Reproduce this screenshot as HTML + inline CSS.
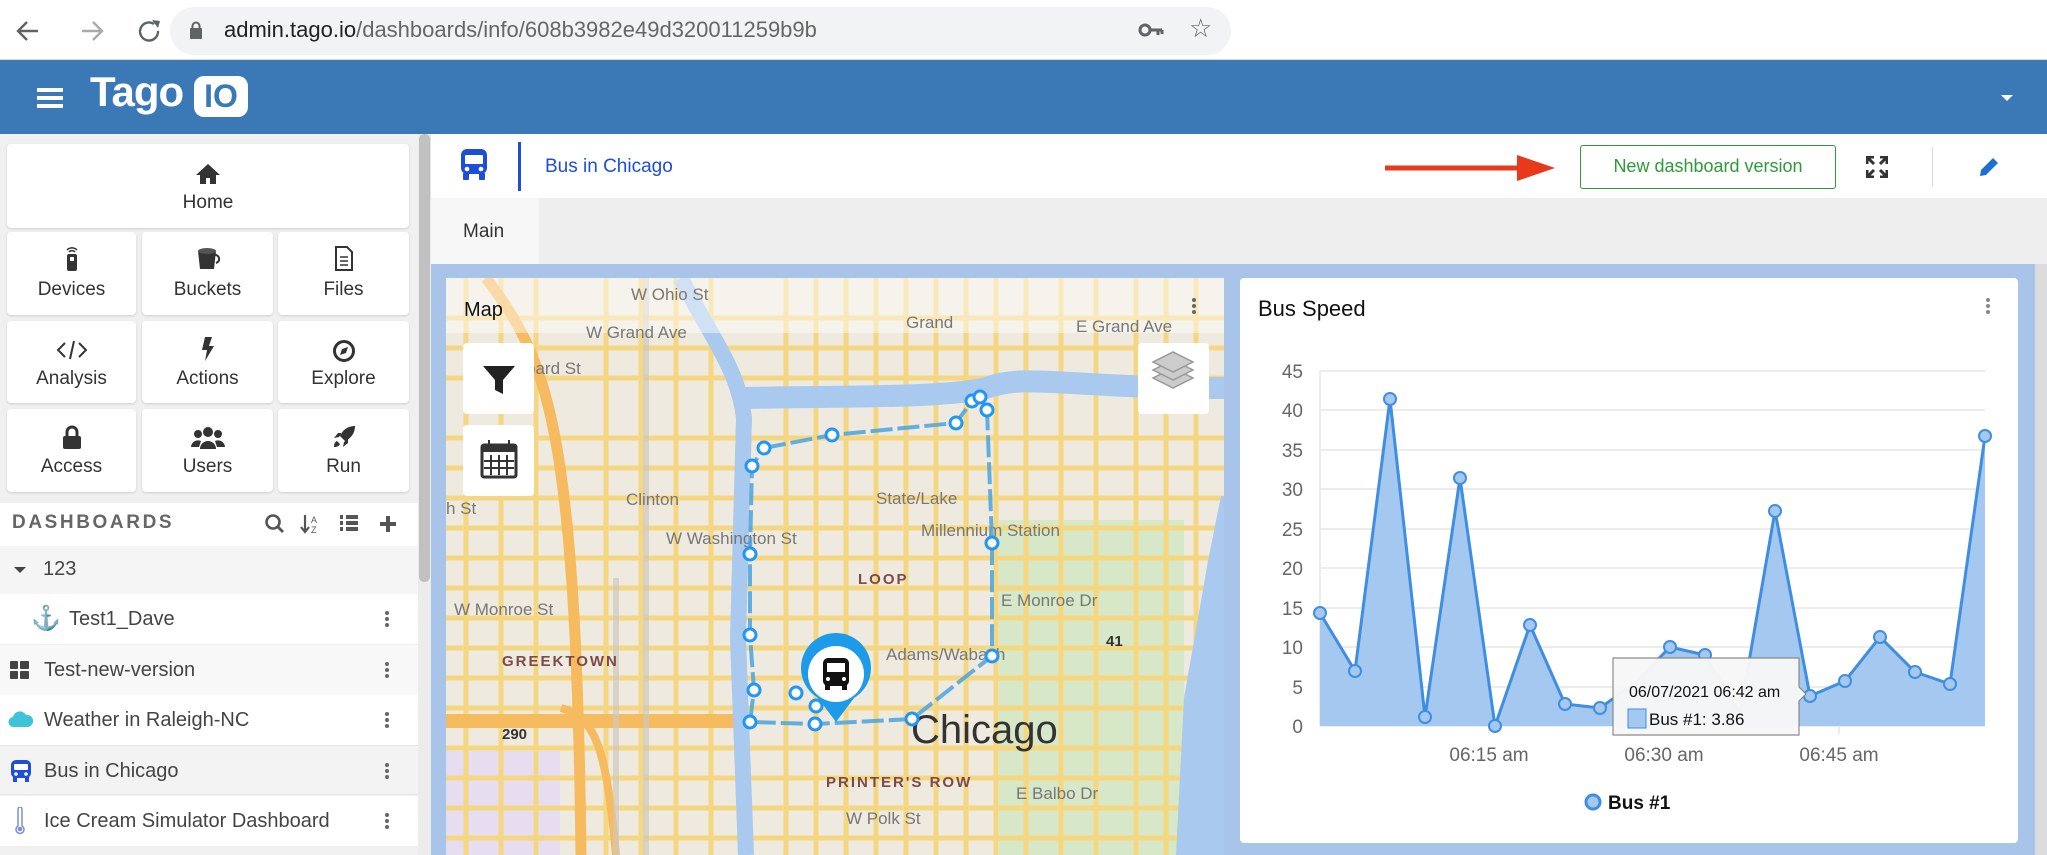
<!DOCTYPE html>
<html><head><meta charset="utf-8"><style>
*{margin:0;padding:0;box-sizing:border-box}
body{width:2047px;height:855px;overflow:hidden;font-family:"Liberation Sans",Arial,sans-serif;background:#fff;position:relative}
.abs{position:absolute}
.tile{position:absolute;background:#fff;border-radius:4px;box-shadow:0 1px 2px rgba(0,0,0,.15);text-align:center;color:#333;font-size:19px}
.tile svg{position:absolute;left:50%;transform:translateX(-50%)}
.row{position:absolute;left:0;width:418px;height:50px;font-size:20px;color:#444;line-height:50px}
.keb{position:absolute;left:385px;top:17px;width:4px}
.keb i{display:block;width:4px;height:4px;background:#666;border-radius:2px;margin-bottom:2px}
</style></head><body>
<div class="abs" style="left:0;top:0;width:2047px;height:60px;background:#fff;border-bottom:1px solid #ddd"></div>
<svg class="abs" style="left:14px;top:18px" width="160" height="26" viewBox="0 0 160 26">
<path d="M24 13H5M13 4l-9 9 9 9" stroke="#5f6368" stroke-width="2.4" fill="none"/>
<path d="M68 13H87M79 4l9 9-9 9" stroke="#aaa" stroke-width="2.4" fill="none"/>
<path d="M140 6a9 9 0 1 0 4 7" stroke="#5f6368" stroke-width="2.4" fill="none"/><path d="M138 2l8 1-2 7z" fill="#5f6368"/>
</svg>
<div class="abs" style="left:170px;top:7px;width:1061px;height:48px;background:#f1f3f4;border-radius:24px"></div>
<svg class="abs" style="left:189px;top:20px" width="14" height="20"><rect x="1" y="8" width="12" height="11" rx="1" fill="#5f6368"/><path d="M3.5 9V6a3.5 3.5 0 0 1 7 0v3" stroke="#5f6368" stroke-width="2" fill="none"/></svg>
<div class="abs" style="left:224px;top:17px;font-size:22px;color:#202124">admin.tago.io<span style="color:#666">/dashboards/info/608b3982e49d320011259b9b</span></div>
<svg class="abs" style="left:1138px;top:20px" width="26" height="20"><circle cx="7" cy="10" r="5" stroke="#5f6368" stroke-width="3" fill="none"/><path d="M12 10h12M20 10v5M24 10v4" stroke="#5f6368" stroke-width="3"/></svg>
<div class="abs" style="left:1189px;top:13px;font-size:26px;color:#5f6368">☆</div>
<div class="abs" style="left:0;top:60px;width:2047px;height:74px;background:#3a79b6"></div>
<div class="abs" style="left:37px;top:88px;width:26px;height:20px;border-top:4px solid #fff;border-bottom:4px solid #fff"><div style="margin-top:4px;height:4px;background:#fff"></div></div>
<div class="abs" style="left:90px;top:68px;font-size:42px;color:#fff;letter-spacing:-1px;font-weight:bold">Tago</div>
<div class="abs" style="left:194px;top:76px;width:54px;height:41px;background:#fff;border-radius:10px;color:#3a79b6;font-weight:bold;font-size:32px;text-align:center;line-height:41px">IO</div>
<div class="abs" style="left:2001px;top:95px;border-left:6px solid transparent;border-right:6px solid transparent;border-top:6px solid #fff"></div>
<div class="abs" style="left:0;top:134px;width:418px;height:721px;background:#f0f0f0"></div>
<div class="abs" style="left:418px;top:134px;width:13px;height:721px;background:#ececec"></div>
<div class="abs" style="left:419px;top:134px;width:11px;height:448px;background:#c1c1c1;border-radius:5px"></div>
<div class="tile" style="left:7px;top:144px;width:402px;height:84px"><svg style="top:19px" width="26" height="22" viewBox="0 0 26 22"><path d="M13 1L1 12h4v9h6v-6h4v6h6v-9h4z" fill="#333"/></svg><div style="margin-top:48px">Home</div></div>
<div class="tile" style="left:7px;top:232px;width:129px;height:83px"><svg style="top:14px" width="14" height="26"><rect x="2" y="8" width="10" height="17" rx="2" fill="#333"/><path d="M2 4a7 7 0 0 1 10 0M4 6a4 4 0 0 1 6 0" stroke="#333" stroke-width="1.5" fill="none"/><rect x="5" y="11" width="4" height="4" fill="#fff"/></svg><div style="margin-top:47px">Devices</div></div>
<div class="tile" style="left:142px;top:232px;width:131px;height:83px"><svg style="top:15px" width="26" height="24"><path d="M3 4h18l-2 18H5z" fill="#333"/><ellipse cx="12" cy="4" rx="9" ry="3" fill="#555"/><path d="M19 8a4 4 0 0 1 2 8" stroke="#333" stroke-width="2" fill="none"/></svg><div style="margin-top:47px">Buckets</div></div>
<div class="tile" style="left:278px;top:232px;width:131px;height:83px"><svg style="top:14px" width="20" height="25"><path d="M2 1h11l5 5v18H2z" stroke="#333" stroke-width="2" fill="none"/><path d="M6 11h8M6 15h8M6 19h8" stroke="#333" stroke-width="1.6"/></svg><div style="margin-top:47px">Files</div></div>
<div class="tile" style="left:7px;top:321px;width:129px;height:82px"><svg style="top:19px" width="30" height="20"><path d="M8 3L1 10l7 7M22 3l7 7-7 7M17 1l-4 18" stroke="#333" stroke-width="2" fill="none"/></svg><div style="margin-top:47px">Analysis</div></div>
<div class="tile" style="left:142px;top:321px;width:131px;height:82px"><svg style="top:15px" width="16" height="26"><path d="M5 1h7L9 10h5L5 25l2-11H2z" fill="#333"/></svg><div style="margin-top:47px">Actions</div></div>
<div class="tile" style="left:278px;top:321px;width:131px;height:82px"><svg style="top:18px" width="24" height="24"><circle cx="12" cy="12" r="9.5" stroke="#333" stroke-width="3" fill="none"/><path d="M16 8l-2 6-6 2 2-6z" fill="#333"/></svg><div style="margin-top:47px">Explore</div></div>
<div class="tile" style="left:7px;top:409px;width:129px;height:83px"><svg style="top:16px" width="20" height="24"><path d="M5 11V7a5 5 0 0 1 10 0v4" stroke="#333" stroke-width="3" fill="none"/><rect x="1" y="11" width="18" height="13" rx="2" fill="#333"/></svg><div style="margin-top:47px">Access</div></div>
<div class="tile" style="left:142px;top:409px;width:131px;height:83px"><svg style="top:16px" width="34" height="24"><circle cx="17" cy="7" r="5" fill="#333"/><circle cx="7" cy="9" r="4" fill="#333"/><circle cx="27" cy="9" r="4" fill="#333"/><path d="M9 24a8 8 0 0 1 16 0zM0 22a7 7 0 0 1 10-6l-2 6zM34 22a7 7 0 0 0-10-6l2 6z" fill="#333"/></svg><div style="margin-top:47px">Users</div></div>
<div class="tile" style="left:278px;top:409px;width:131px;height:83px"><svg style="top:16px" width="24" height="24"><path d="M23 1c-8 0-13 5-15 10l5 5c5-2 10-7 10-15zM7 12l-5 1 4-5h4zM12 17l-1 5 5-4v-4zM5 16c-3 1-3 5-3 6 1 0 5 0 6-3z" fill="#333"/></svg><div style="margin-top:47px">Run</div></div>
<div class="abs" style="left:0;top:503px;width:418px;height:44px;background:#fff"></div>
<div class="abs" style="left:12px;top:512px;font-size:19px;font-weight:bold;color:#666;letter-spacing:2.6px">DASHBOARDS</div>
<svg class="abs" style="left:264px;top:512px" width="136" height="24"><circle cx="9" cy="10" r="6.5" stroke="#555" stroke-width="2.6" fill="none"/><path d="M14 15l5 5" stroke="#555" stroke-width="2.8"/>
<path d="M41 3v16M37 15l4 5 4-5" stroke="#555" stroke-width="2.2" fill="none"/><text x="47" y="11" font-size="9" fill="#555" font-family="Liberation Sans">A</text><text x="47" y="21" font-size="9" fill="#555" font-family="Liberation Sans">Z</text>
<path d="M76 5h3M76 11h3M76 17h3M82 5h12M82 11h12M82 17h12" stroke="#555" stroke-width="4"/>
<path d="M124 4v16M116 12h16" stroke="#555" stroke-width="4"/></svg>
<div class="row" style="top:546px;background:#f5f5f5;height:48px"><div class="abs" style="left:14px;top:21px;border-left:6px solid transparent;border-right:6px solid transparent;border-top:6px solid #444"></div><span class="abs" style="left:43px;top:-2px">123</span></div>
<div class="row" style="top:594px;background:#fff"><span class="abs" style="left:31px;font-size:24px;color:#111">⚓</span><span class="abs" style="left:69px">Test1_Dave</span><div class="keb"><i></i><i></i><i></i></div></div>
<div class="row" style="top:645px;background:#f8f8f8"><svg class="abs" style="left:10px;top:16px" width="20" height="18"><rect x="0" y="0" width="8" height="8" rx="1" fill="#444"/><rect x="10" y="0" width="9" height="8" rx="1" fill="#444"/><rect x="0" y="10" width="8" height="8" rx="1" fill="#444"/><rect x="10" y="10" width="9" height="8" rx="1" fill="#444"/></svg><span class="abs" style="left:44px">Test-new-version</span><div class="keb"><i></i><i></i><i></i></div></div>
<div class="row" style="top:695px;background:#fff"><svg class="abs" style="left:8px;top:15px" width="26" height="18"><path d="M6 17a5 5 0 0 1-1-10 7 7 0 0 1 13-2 6 6 0 0 1 2 12z" fill="#3fc3d8"/></svg><span class="abs" style="left:44px">Weather in Raleigh-NC</span><div class="keb"><i></i><i></i><i></i></div></div>
<div class="row" style="top:745px;background:#f3f3f3;border-top:1px solid #e4e4e4;border-bottom:1px solid #e4e4e4"><svg class="abs" style="left:10px;top:13px" width="22" height="24"><rect x="1" y="1" width="20" height="18" rx="5" fill="#1e4ed8"/><rect x="4" y="5" width="14" height="6" rx="1" fill="#fff"/><circle cx="6" cy="15" r="1.8" fill="#fff"/><circle cx="16" cy="15" r="1.8" fill="#fff"/><rect x="3" y="18" width="4" height="5" fill="#1e4ed8"/><rect x="15" y="18" width="4" height="5" fill="#1e4ed8"/></svg><span class="abs" style="left:44px">Bus in Chicago</span><div class="keb"><i></i><i></i><i></i></div></div>
<div class="row" style="top:796px;background:#fff"><svg class="abs" style="left:14px;top:11px" width="12" height="28"><path d="M4 2a2 2 0 0 1 4 0v17a4 4 0 1 1-4 0z" stroke="#7b8fd6" stroke-width="1.5" fill="none"/><circle cx="6" cy="22" r="2.3" fill="#7b8fd6"/></svg><span class="abs" style="left:44px">Ice Cream Simulator Dashboard</span><div class="keb"><i></i><i></i><i></i></div></div>
<div class="abs" style="left:431px;top:134px;width:1616px;height:64px;background:#fff;box-shadow:0 2px 3px rgba(0,0,0,.1)"></div>
<svg class="abs" style="left:460px;top:148px" width="28" height="34"><rect x="1" y="1" width="26" height="25" rx="6" fill="#1e4ed8"/><rect x="5" y="7" width="18" height="9" rx="1" fill="#fff"/><circle cx="7" cy="21" r="2.3" fill="#fff"/><circle cx="21" cy="21" r="2.3" fill="#fff"/><rect x="3" y="25" width="6" height="7" rx="1" fill="#1e4ed8"/><rect x="19" y="25" width="6" height="7" rx="1" fill="#1e4ed8"/></svg>
<div class="abs" style="left:518px;top:142px;width:3px;height:49px;background:#1e4ed8"></div>
<div class="abs" style="left:545px;top:156px;font-size:19px;color:#1e4ed8">Bus in Chicago</div>
<svg class="abs" style="left:1385px;top:153px" width="172" height="30"><path d="M0 15H140" stroke="#e8391b" stroke-width="5"/><path d="M132 2l38 13-38 13z" fill="#e8391b"/></svg>
<div class="abs" style="left:1580px;top:145px;width:256px;height:44px;border:1.5px solid #2e9a3a;border-radius:3px;color:#2e9a3a;font-size:18px;text-align:center;line-height:41px">New dashboard version</div>
<svg class="abs" style="left:1866px;top:156px" width="22" height="22"><path d="M1 8V1h7M14 1h7v7M21 14v7h-7M8 21H1v-7M1 1l7 7M21 1l-7 7M21 21l-7-7M1 21l7-7" stroke="#333" stroke-width="3" fill="none"/></svg>
<div class="abs" style="left:1932px;top:147px;width:1px;height:40px;background:#ddd"></div>
<svg class="abs" style="left:1978px;top:156px" width="22" height="22"><path d="M2 20l1-6L15 2l5 5L8 19z" fill="#1e6fd0"/></svg>
<div class="abs" style="left:431px;top:198px;width:1616px;height:66px;background:#eeeeee"></div>
<div class="abs" style="left:431px;top:198px;width:108px;height:66px;background:#f7f7f7"></div>
<div class="abs" style="left:463px;top:221px;font-size:19px;color:#333">Main</div>
<div class="abs" style="left:431px;top:264px;width:1616px;height:591px;background:#a8c4e9"></div>
<div class="abs" style="left:2035px;top:264px;width:12px;height:591px;background:#dcdcdc"></div>
<svg class="abs" style="left:446px;top:278px" width="778" height="577" viewBox="0 0 778 577" font-family="Liberation Sans">
<rect width="778" height="577" fill="#efeadf"/>
<rect x="0" y="473" width="114" height="104" fill="#e6def0"/>
<rect x="553" y="242" width="185" height="335" fill="#d7e8c9"/>
<g stroke="#f6d77c" stroke-width="5" opacity=".95">
<path d="M0 40H778M0 70H778M0 100H778M0 160H778M0 190H778M0 220H778M0 250H778M0 280H778M0 310H778M0 340H778M0 370H778M0 400H778M0 430H778M0 470H778M0 500H778M0 530H778M0 560H778"/>
<path d="M20 0V577M55 0V577M90 0V577M160 0V577M195 0V577M230 0V577M265 0V577M340 0V577M370 0V577M400 0V577M430 0V577M460 0V577M490 0V577M520 0V577M550 0V577M580 0V577M615 0V577M650 0V577M690 0V577M720 0V577M750 0V577"/>
</g>
<path d="M730 577L738 420L762 283L775 218H778V577Z" fill="#a9c9ee"/>
<path d="M40 0C100 80 130 140 135 577" stroke="#f5bb5e" stroke-width="11" fill="none"/>
<path d="M0 443H300" stroke="#f5bb5e" stroke-width="14"/>
<path d="M115 430C150 440 160 470 170 577" stroke="#f5bb5e" stroke-width="8" fill="none"/>
<path d="M235 0C265 60 292 90 298 140L292 360L300 577" stroke="#a9c9ee" stroke-width="16" fill="none"/>
<path d="M298 120C400 118 500 120 540 110C580 95 620 110 778 110" stroke="#a9c9ee" stroke-width="22" fill="none"/>
<path d="M200 0V577M170 300V577" stroke="#cfcac0" stroke-width="6" opacity=".7"/>
<rect width="778" height="55" fill="#fff" opacity=".45"/>
<g fill="#777" font-size="17">
<text x="185" y="22">W Ohio St</text><text x="140" y="60">W Grand Ave</text><text x="460" y="50">Grand</text>
<text x="630" y="54">E Grand Ave</text><text x="80" y="96">bard St</text><text x="180" y="227">Clinton</text>
<text x="430" y="226">State/Lake</text><text x="475" y="258">Millennium Station</text><text x="220" y="266">W Washington St</text>
<text x="8" y="337">W Monroe St</text><text x="555" y="328">E Monroe Dr</text><text x="440" y="382">Adams/Wabash</text>
<text x="570" y="521">E Balbo Dr</text><text x="400" y="546">W Polk St</text><text x="0" y="236">h St</text>
</g>
<g fill="#7a4b4b" font-size="15" font-weight="bold" letter-spacing="2"><text x="412" y="306">LOOP</text><text x="56" y="388">GREEKTOWN</text><text x="380" y="509">PRINTER'S ROW</text></g>
<text x="56" y="461" font-size="15" font-weight="bold" fill="#333">290</text><text x="660" y="368" font-size="15" font-weight="bold" fill="#333">41</text>
<text x="465" y="465" font-size="40" fill="#333">Chicago</text>
<polyline points="318,170 386,157 510,145 526,123 534,119 541,132 546,265 546,378 466,441 369,446 304,444 308,412 304,357 304,276 306,188 318,170" fill="none" stroke="#4aa3e0" stroke-width="4" stroke-dasharray="22 5" opacity=".85"/>
<g fill="#fff" stroke="#2196f3" stroke-width="3">
<circle cx="318" cy="170" r="6"/><circle cx="386" cy="157" r="6"/><circle cx="510" cy="145" r="6"/><circle cx="526" cy="123" r="6"/><circle cx="534" cy="119" r="6"/><circle cx="541" cy="132" r="6"/><circle cx="546" cy="265" r="6"/><circle cx="546" cy="378" r="6"/><circle cx="466" cy="441" r="6"/><circle cx="369" cy="446" r="6"/><circle cx="304" cy="444" r="6"/><circle cx="308" cy="412" r="6"/><circle cx="304" cy="357" r="6"/><circle cx="304" cy="276" r="6"/><circle cx="306" cy="188" r="6"/><circle cx="350" cy="415" r="6"/><circle cx="370" cy="428" r="6"/>
</g>
<path d="M390 444L372 420A35 35 0 1 1 408 420Z" fill="#1e9be8"/>
<circle cx="390" cy="396" r="28" fill="#fff"/>
<rect x="377" y="380" width="26" height="28" rx="5" fill="#111"/><rect x="381" y="385" width="18" height="9" fill="#fff"/><circle cx="382" cy="401" r="2" fill="#fff"/><circle cx="398" cy="401" r="2" fill="#fff"/><rect x="379" y="407" width="5" height="5" fill="#111"/><rect x="396" y="407" width="5" height="5" fill="#111"/>
<text x="18" y="38" font-size="20" fill="#111">Map</text>
<g fill="#666"><circle cx="748" cy="22" r="2"/><circle cx="748" cy="28" r="2"/><circle cx="748" cy="34" r="2"/></g>
<rect x="17" y="65" width="71" height="71" rx="4" fill="#fff"/><path d="M37 88h32l-12 14v14l-8-4v-10z" fill="#222"/>
<rect x="17" y="147" width="71" height="71" rx="4" fill="#fff"/><rect x="36" y="167" width="34" height="32" rx="2" fill="none" stroke="#333" stroke-width="3"/><rect x="36" y="167" width="34" height="7" fill="#333"/><path d="M43 162v9M63 162v9M45 177v20M53 177v20M61 177v20M38 183h30M38 190h30" stroke="#333" stroke-width="2"/>
<rect x="692" y="65" width="71" height="71" rx="4" fill="#fff"/><g fill="#ccc" stroke="#999" stroke-width="1.5"><path d="M727 110l-20-10 20-10 20 10z"/><path d="M727 102l-20-10 20-10 20 10z"/><path d="M727 94l-20-10 20-10 20 10z"/></g>
</svg>
<svg class="abs" style="left:1240px;top:278px" width="778" height="565" viewBox="0 0 778 565" font-family="Liberation Sans">
<rect width="778" height="565" rx="4" fill="#fff"/>
<text x="18" y="38" font-size="22" fill="#111">Bus Speed</text>
<g fill="#888"><circle cx="748" cy="22" r="2"/><circle cx="748" cy="28" r="2"/><circle cx="748" cy="34" r="2"/></g>
<g stroke="#e6e6e6" stroke-width="1.5"><path d="M80 93H745M80 132H745M80 172H745M80 211H745M80 251H745M80 290H745M80 330H745M80 369H745M80 409H745M80 448H745"/></g>
<path d="M80 93V448M249 448v8M424 448v8M599 448v8" stroke="#e6e6e6" stroke-width="1.5"/>
<g fill="#666" font-size="19" text-anchor="end"><text x="63" y="100">45</text><text x="63" y="139">40</text><text x="63" y="179">35</text><text x="63" y="218">30</text><text x="63" y="258">25</text><text x="63" y="297">20</text><text x="63" y="337">15</text><text x="63" y="376">10</text><text x="63" y="416">5</text><text x="63" y="455">0</text></g>
<g fill="#666" font-size="19" text-anchor="middle"><text x="249" y="483">06:15 am</text><text x="424" y="483">06:30 am</text><text x="599" y="483">06:45 am</text></g>
<polygon points="80,448 80,335 115,393 150,121 185,439 220,200 255,448 290,347 325,426 360,430 395,405 430,369 465,377 500,436 535,233 570,418 605,403 640,359 675,394 710,406 745,158 745,448" fill="#a4c8ef"/>
<polyline points="80,335 115,393 150,121 185,439 220,200 255,448 290,347 325,426 360,430 395,405 430,369 465,377 500,436 535,233 570,418 605,403 640,359 675,394 710,406 745,158" fill="none" stroke="#3f8ee0" stroke-width="3"/>
<g fill="#a4c8ef" stroke="#3f8ee0" stroke-width="2"><circle cx="80" cy="335" r="6"/><circle cx="115" cy="393" r="6"/><circle cx="150" cy="121" r="6"/><circle cx="185" cy="439" r="6"/><circle cx="220" cy="200" r="6"/><circle cx="255" cy="448" r="6"/><circle cx="290" cy="347" r="6"/><circle cx="325" cy="426" r="6"/><circle cx="360" cy="430" r="6"/><circle cx="430" cy="369" r="6"/><circle cx="465" cy="377" r="6"/><circle cx="535" cy="233" r="6"/><circle cx="570" cy="418" r="6"/><circle cx="605" cy="403" r="6"/><circle cx="640" cy="359" r="6"/><circle cx="675" cy="394" r="6"/><circle cx="710" cy="406" r="6"/><circle cx="745" cy="158" r="6"/></g>
<path d="M373 380H559V409L566 416L559 423V457H373Z" fill="#f7f7f7" stroke="#888" stroke-width="1.2" opacity=".97"/>
<text x="389" y="419" font-size="16" fill="#111">06/07/2021 06:42 am</text>
<rect x="388" y="431" width="18" height="19" fill="#a4c8ef" stroke="#3f8ee0"/>
<text x="409" y="447" font-size="17" fill="#111">Bus #1: 3.86</text>
<circle cx="353" cy="524" r="7" fill="#a4c8ef" stroke="#3f8ee0" stroke-width="3"/>
<text x="368" y="531" font-size="19" font-weight="bold" fill="#111">Bus #1</text>
</svg>
</body></html>
